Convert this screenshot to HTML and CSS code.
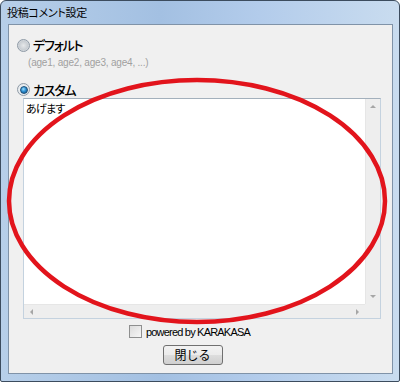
FILE: index.html
```html
<!DOCTYPE html>
<html lang="ja">
<head>
    <meta charset="UTF-8">
    <title>投稿コメント設定</title>
    <link rel="stylesheet" href="styles.css">
</head>
<body>
    <div class="window">
        <div class="titlebar">投稿コメント設定</div>
        <div class="client">
            <div class="option">
                <span class="radio"></span>
                <span class="label">デフォルト</span>
            </div>
            <div class="hint">(age1, age2, age3, age4, ...)</div>
            <div class="option custom">
                <span class="radio checked"></span>
                <span class="label">カスタム</span>
            </div>
            <div class="editbox">
                <div class="text">あげます</div>
                <div class="vscroll">
                    <span class="arrow up"></span>
                    <span class="arrow down"></span>
                </div>
                <div class="hscroll">
                    <span class="arrow left"></span>
                    <span class="arrow right"></span>
                </div>
                <div class="corner"></div>
            </div>
            <div class="check-row">
                <span class="checkbox"></span>
                <span>powered by KARAKASA</span>
            </div>
            <div class="button-row">
                <button class="btn">閉じる</button>
            </div>
        </div>
        <!-- annotation drawn on top of the screenshot -->
        <svg class="mark" width="400" height="382" viewBox="0 0 400 382">
            <ellipse cx="197" cy="201" rx="188" ry="121" fill="none" stroke="#e2141c" stroke-width="4.5"/>
        </svg>
    </div>
</body>
</html>
```

FILE: styles.css
```css
body {
    margin: 0;
    background: #ffffff;
}
.window {
    position: relative;
    width: 400px;
    height: 382px;
    box-sizing: border-box;
    border: 1px solid #3c4c5e;
    border-radius: 6px 6px 2px 2px;
    background: linear-gradient(90deg, #b7cfe9 0%, #a3c0e2 40%, #b3cceb 65%, #c9dcef 100%);
    display: flex;
    flex-direction: column;
    font-family: "Noto Sans CJK JP", "Noto Sans", sans-serif;
    font-feature-settings: "palt";
}
.titlebar {
    height: 23px;
    padding-left: 6px;
    font-size: 11px;
    line-height: 23px;
    letter-spacing: -0.3px;
    color: #000;
}
.client {
    margin: 0 6px 7px 7px;
    flex: 1;
    background: #f0f0f0;
    border: 1px solid #8093a8;
    display: flex;
    flex-direction: column;
}
.option {
    display: flex;
    align-items: center;
    height: 18px;
    margin-top: 11px;
    padding-left: 8px;
    gap: 3px;
}
.option.custom {
    margin-top: 11px;
    height: 17px;
}
.label {
    font-size: 13px;
    line-height: 18px;
    font-weight: 500;
    letter-spacing: -1.2px;
    color: #000;
}
.radio {
    width: 11px;
    height: 11px;
    border-radius: 50%;
    border: 1px solid #8e9aa6;
    background: radial-gradient(circle at 50% 50%, #e6e8ea 0, #c9ced3 55%, #eef0f2 100%);
    box-sizing: content-box;
    display: inline-flex;
    align-items: center;
    justify-content: center;
}
.radio.checked {
    background: radial-gradient(circle at 50% 50%, #f4f6f8 0, #dfe4e8 100%);
}
.radio.checked::after {
    content: "";
    width: 6px;
    height: 6px;
    border-radius: 50%;
    background: radial-gradient(circle at 40% 35%, #9fe0ff 0, #2c8fd2 45%, #15507f 100%);
    border: 1px solid #1d4f78;
}
.hint {
    font-family: "Liberation Sans", sans-serif;
    font-size: 10px;
    letter-spacing: -0.2px;
    color: #a0a0a0;
    height: 15px;
    line-height: 15px;
    padding-left: 19px;
    margin-top: 1px;
}
.editbox {
    margin-left: 14px;
    width: 358px;
    height: 221px;
    box-sizing: border-box;
    border: 1px solid #c4d2df;
    border-top-color: #a3b0bc;
    background: #fff;
    display: grid;
    grid-template-columns: 1fr 15px;
    grid-template-rows: 1fr 14px;
}
.text {
    font-size: 11px;
    line-height: 14px;
    letter-spacing: -0.8px;
    padding: 2px 2px;
    color: #000;
}
.vscroll, .hscroll, .corner {
    background: #eeeeee;
    position: relative;
}
.vscroll {
    border-left: 1px solid #e6e6e6;
}
.hscroll {
    border-top: 1px solid #e6e6e6;
}
.arrow {
    position: absolute;
    width: 0;
    height: 0;
}
.arrow.up {
    top: 6px;
    left: 4px;
    border-left: 3px solid transparent;
    border-right: 3px solid transparent;
    border-bottom: 3px solid #a6a6a6;
}
.arrow.down {
    bottom: 6px;
    left: 4px;
    border-left: 3px solid transparent;
    border-right: 3px solid transparent;
    border-top: 3px solid #a6a6a6;
}
.arrow.left {
    left: 6px;
    top: 4px;
    border-top: 3px solid transparent;
    border-bottom: 3px solid transparent;
    border-right: 3px solid #a6a6a6;
}
.arrow.right {
    right: 6px;
    top: 4px;
    border-top: 3px solid transparent;
    border-bottom: 3px solid transparent;
    border-left: 3px solid #a6a6a6;
}
.check-row {
    display: flex;
    align-items: center;
    justify-content: center;
    gap: 4px;
    margin-top: 6px;
    height: 13px;
    font-family: "Liberation Sans", sans-serif;
    font-size: 11px;
    letter-spacing: -0.8px;
    color: #000;
    padding-right: 22px;
}
.checkbox {
    width: 11px;
    height: 11px;
    border: 1px solid #8e8f8f;
    background: linear-gradient(135deg, #dcdcdc 0%, #f6f6f6 100%);
}
.button-row {
    display: flex;
    justify-content: center;
    margin-top: 7px;
    padding-right: 16px;
}
.btn {
    width: 60px;
    height: 20px;
    border: 1px solid #707070;
    border-radius: 3px;
    background: linear-gradient(#f2f2f2 0%, #ebebeb 50%, #dddddd 51%, #cfcfcf 100%);
    font-family: "Noto Sans CJK JP", sans-serif;
    font-size: 12px;
    line-height: 16px;
    padding: 0;
    color: #000;
}
.mark {
    position: absolute;
    left: -1px;
    top: -1px;
    pointer-events: none;
}
```
